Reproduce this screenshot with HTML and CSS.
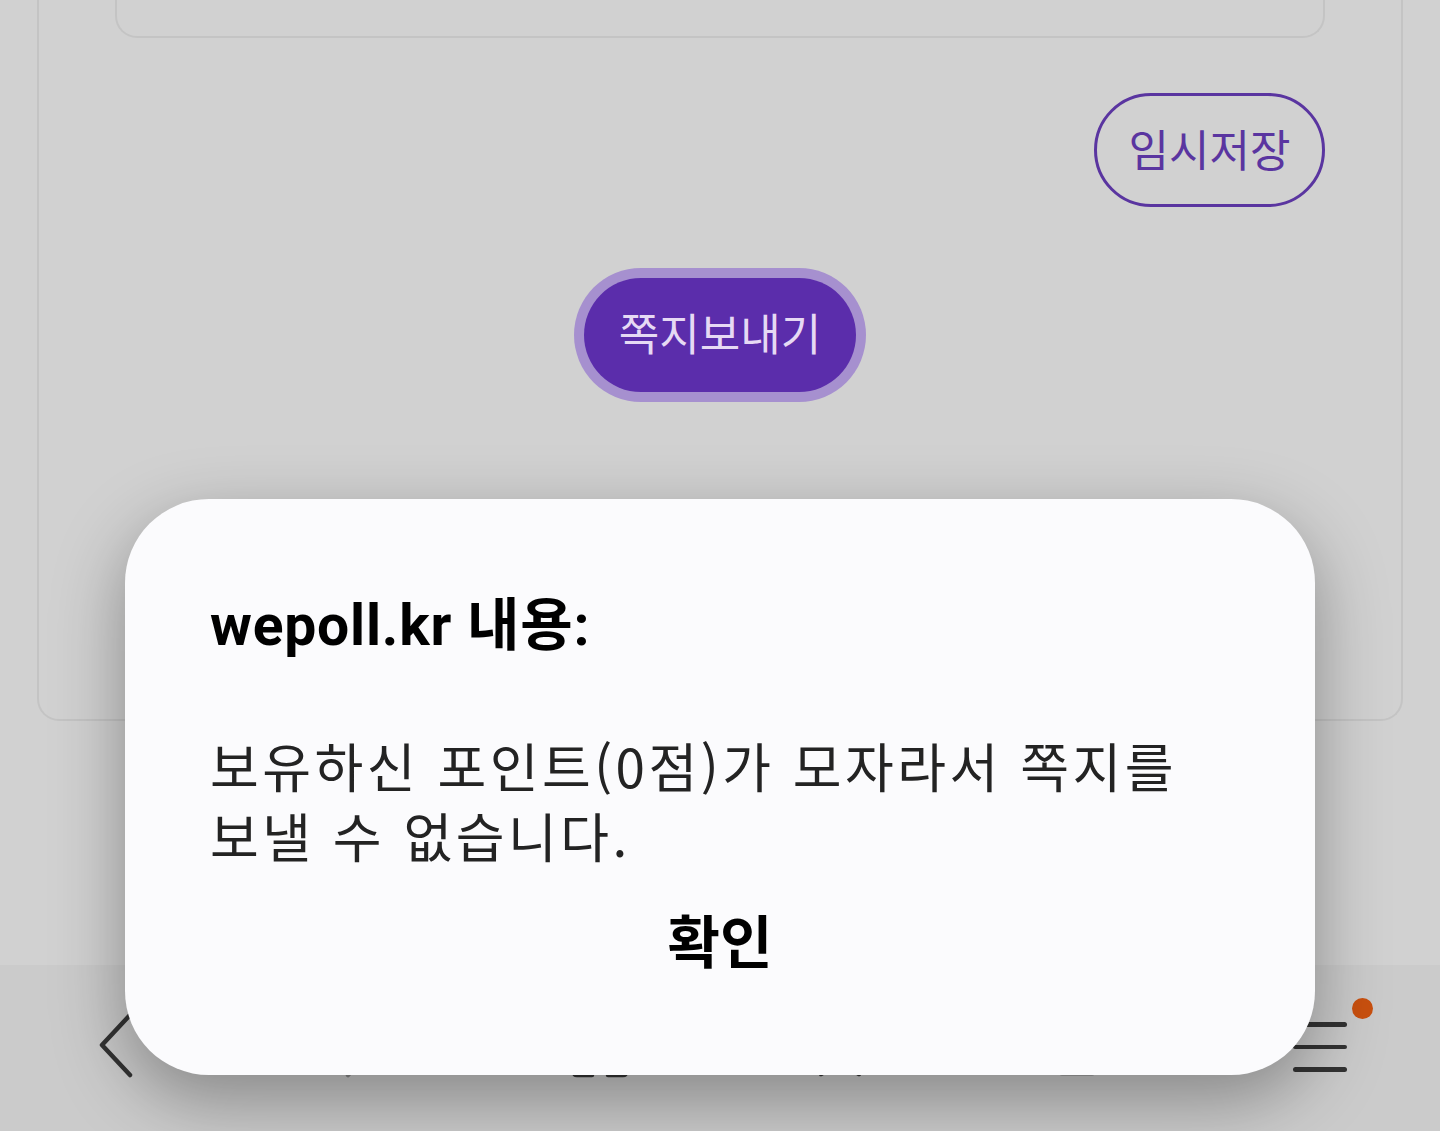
FILE: index.html
```html
<!DOCTYPE html>
<html lang="ko">
<head>
<meta charset="utf-8">
<title>wepoll.kr</title>
<link rel="stylesheet" href="styles.css">
</head>
<body>
<div class="page">
  <main class="wrap">
    <section class="outer-card">
      <div class="inner-card"></div>
      <div class="save-row">
        <button class="btn-save">임시저장</button>
      </div>
      <div class="send-row">
        <button class="btn-send">쪽지보내기</button>
      </div>
    </section>
  </main>
  <nav class="navbar">
    <div class="nav-item">
      <svg width="40" height="70" viewBox="0 0 40 70"><path d="M32 4 L4 34 L32 64" fill="none" stroke="#333" stroke-width="4.5" stroke-linecap="round" stroke-linejoin="round"/></svg>
    </div>
    <div class="nav-item">
      <svg width="40" height="70" viewBox="0 0 40 70"><path d="M8 4 L36 34 L8 64" fill="none" stroke="#888" stroke-width="4.5" stroke-linecap="round" stroke-linejoin="round"/></svg>
    </div>
    <div class="nav-item">
      <svg width="60" height="64" viewBox="0 0 60 64"><path d="M4 28 L30 4 L56 28 L56 58 Q56 61 53 61 L38 61 L38 42 L22 42 L22 61 L7 61 Q4 61 4 58 Z" fill="none" stroke="#333" stroke-width="4.5" stroke-linejoin="round"/></svg>
    </div>
    <div class="nav-item">
      <svg width="66" height="64" viewBox="0 0 66 64"><path d="M33 3 L41 23 L63 24 L46 38 L52 60 L33 48 L14 60 L20 38 L3 24 L25 23 Z" fill="none" stroke="#333" stroke-width="4.5" stroke-linejoin="round"/></svg>
    </div>
    <div class="nav-item">
      <svg width="56" height="60" viewBox="0 0 56 60"><rect x="3" y="12" width="44" height="45" rx="7" fill="none" stroke="#333" stroke-width="4.5"/><path d="M12 3 L46 3 Q53 3 53 10 L53 44" fill="none" stroke="#333" stroke-width="4.5" stroke-linecap="round"/></svg>
    </div>
    <div class="nav-item menu">
      <span class="bar"></span>
      <span class="bar"></span>
      <span class="bar"></span>
      <span class="dot"></span>
    </div>
  </nav>
</div>

<div class="dialog" role="alertdialog">
  <h2 class="dlg-title">wepoll.kr 내용:</h2>
  <p class="dlg-msg">보유하신 포인트(0점)가 모자라서 쪽지를<br>보낼 수 없습니다.</p>
  <div class="dlg-actions">
    <button class="dlg-ok">확인</button>
  </div>
</div>
</body>
</html>
```

FILE: styles.css
```css
* { box-sizing: border-box; }
html, body { margin: 0; padding: 0; }
body {
  background: #d1d1d1;
  font-family: Roboto, "Noto Sans CJK KR", sans-serif;
  overflow: hidden;
}
.page {
  height: 1131px;
  display: flex;
  flex-direction: column;
}
.wrap {
  padding: 0 37px;
}
.outer-card {
  border: 2px solid #c4c4c4;
  border-top: none;
  border-radius: 0 0 22px 22px;
  padding: 0 76px 327px;
}
.inner-card {
  height: 38px;
  border: 2px solid #c4c4c4;
  border-top: none;
  border-radius: 0 0 22px 22px;
}
.save-row {
  display: flex;
  justify-content: flex-end;
  margin-top: 55px;
}
.btn-save {
  width: 231px;
  height: 114px;
  border: 3px solid #5a35a0;
  border-radius: 57px;
  background: transparent;
  color: #5a35a0;
  font-family: "Noto Sans CJK KR", sans-serif;
  font-size: 44px;
  font-weight: 400;
  padding: 0;
  padding-bottom: 4px;
}
.send-row {
  display: flex;
  justify-content: center;
  margin-top: 71px;
}
.btn-send {
  width: 272px;
  height: 114px;
  border: none;
  border-radius: 57px;
  background: #5b2dab;
  box-shadow: 0 0 0 10px #a690cf;
  color: #e6d9f4;
  font-family: "Noto Sans CJK KR", sans-serif;
  font-size: 44px;
  font-weight: 400;
  padding: 0 0 6px;
}
.navbar {
  margin-top: auto;
  height: 166px;
  background: #cbcbcb;
  display: grid;
  grid-template-columns: repeat(6, 1fr);
  align-items: center;
}
.nav-item {
  display: flex;
  justify-content: center;
  align-items: center;
  position: relative;
  padding-bottom: 4px;
}
.nav-item:first-child { justify-content: flex-start; padding-left: 98px; }
.nav-item.menu {
  flex-direction: column;
  align-items: center;
  gap: 18px;
  padding-top: 2px;
  padding-bottom: 4px;
}
.bar {
  display: block;
  width: 54px;
  height: 4.5px;
  border-radius: 3px;
  background: #333;
}
.dot {
  position: absolute;
  width: 21px;
  height: 21px;
  border-radius: 50%;
  background: #c9500f;
  top: -22px;
  left: 50%;
  margin-left: 32px;
}
.dialog {
  position: fixed;
  left: 125px;
  top: 499px;
  width: 1190px;
  height: 576px;
  background: #fbfbfd;
  border-radius: 84px;
  box-shadow: 0 24px 70px rgba(0, 0, 0, 0.34);
  padding: 91px 85px 0;
}
.dlg-title {
  margin: 0;
  font-family: Roboto, "Noto Sans CJK KR", sans-serif;
  font-size: 57px;
  font-weight: 700;
  color: #000;
  line-height: 72px;
  letter-spacing: 0.8px;
}
.dlg-msg {
  margin: 68px 0 0;
  font-family: "Noto Sans CJK KR", sans-serif;
  font-size: 53px;
  font-weight: 400;
  color: #232323;
  line-height: 70px;
  letter-spacing: 3.5px;
}
.dlg-actions {
  display: flex;
  justify-content: center;
  margin-top: 28px;
}
.dlg-ok {
  background: none;
  border: none;
  padding: 0;
  font-family: "Noto Sans CJK KR", sans-serif;
  font-size: 57px;
  font-weight: 700;
  color: #000;
  line-height: 80px;
}
```
